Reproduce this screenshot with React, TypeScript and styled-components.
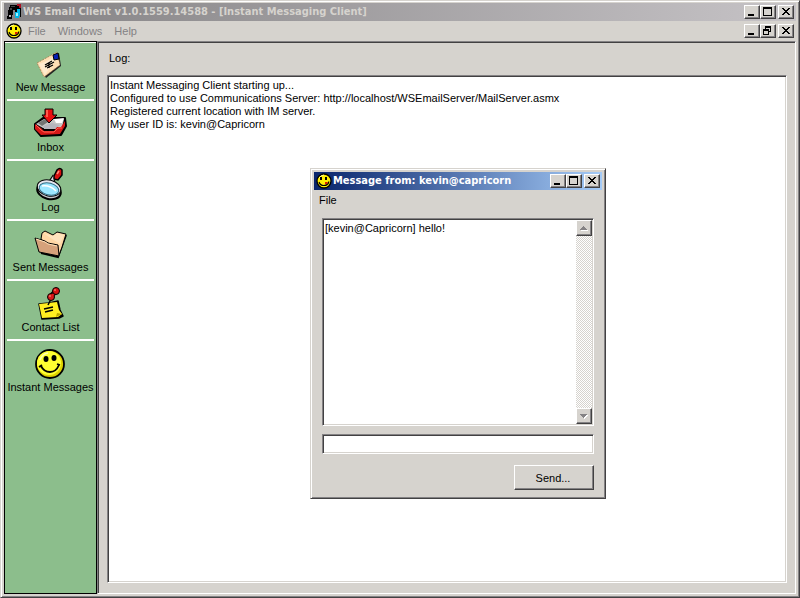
import React, { useState } from "react";
import styled, { createGlobalStyle, css } from "styled-components";

const face = "#d6d3ce";
const shade = "#848284";
const dark = "#424142";
const green = "#8cbe8c";

const GlobalStyle = createGlobalStyle`
  * { box-sizing: border-box; }
  body { margin: 0; background: ${face}; }
  body, button, input, textarea {
    font-family: "Liberation Sans", Arial, sans-serif;
    font-size: 11px;
    line-height: 13px;
    color: #000;
  }
`;

const raised = css`
  border: 1px solid;
  border-color: #fff ${dark} ${dark} #fff;
  box-shadow: inset -1px -1px 0 ${shade};
`;

const sunken = css`
  border: 1px solid;
  border-color: ${shade} #fff #fff ${shade};
  box-shadow: inset 1px 1px 0 ${dark}, inset -1px -1px 0 ${face};
`;

const Frame = styled.div`
  position: relative;
  display: flex;
  flex-direction: column;
  height: 100vh;
  background: ${face};
  border: 1px solid;
  border-color: ${face} ${dark} ${dark} ${face};
  box-shadow: inset 1px 1px 0 #fff, inset -1px -1px 0 ${shade};
  padding: 2px 3px 3px;
`;

const TitleBar = styled.header<{ $active?: boolean }>`
  display: flex;
  align-items: center;
  flex: none;
  height: 18px;
  padding: 0 2px;
  gap: 1px;
  color: ${(p) => (p.$active ? "#fff" : face)};
  background: ${(p) =>
    p.$active
      ? "linear-gradient(90deg, #08246b, #a5cbf7)"
      : "linear-gradient(90deg, #848284, #c6c3c6)"};
`;

const Title = styled.h1`
  flex: 1;
  min-width: 0;
  margin: 0;
  font: bold 11px/16px "DejaVu Sans Condensed", "DejaVu Sans", sans-serif;
  white-space: nowrap;
  overflow: hidden;
`;

const Controls = styled.div`
  display: flex;
  flex: none;
`;

const ControlButton = styled.button`
  ${raised}
  display: flex;
  width: 16px;
  height: 14px;
  padding: 0;
  background: ${face};
  &:last-child { margin-left: 2px; }
`;

const MenuBar = styled.nav`
  display: flex;
  align-items: center;
  flex: none;
  height: 20px;
  padding: 0 2px;
`;

const MenuItem = styled.button<{ $muted?: boolean }>`
  border: 0;
  padding: 0 ${(p) => (p.$muted ? "6px" : "3px")};
  background: none;
  color: ${(p) => (p.$muted ? shade : "#000")};
`;

const Spacer = styled.div`
  flex: 1;
`;

const Body = styled.div`
  display: flex;
  flex: 1;
  min-height: 0;
`;

const Sidebar = styled.nav`
  flex: none;
  width: 93px;
  border: 1px solid #000;
  background: ${green};
  box-shadow: inset 0 1px 0 #fff;
  padding: 0 2px;
`;

const SideButton = styled.button`
  display: flex;
  flex-direction: column;
  align-items: center;
  justify-content: flex-end;
  gap: 1px;
  width: 100%;
  height: 60px;
  padding: 0 0 5px;
  border: 0;
  border-bottom: 2px solid #fff;
  border-image: linear-gradient(${face} 50%, #fff 50%) 1;
  background: none;
  white-space: nowrap;
  &:first-child { height: 59px; }
  &:last-child { border-image: none; border-color: transparent; }
`;

const SideIcon = styled.svg`
  flex: none;
  width: 32px;
  height: 32px;
  overflow: visible;
`;

const Main = styled.main`
  ${sunken}
  display: flex;
  flex-direction: column;
  flex: 1;
  padding: 10px 8px 10px 9px;
`;

const LogLabel = styled.label`
  padding: 0 2px 10px;
`;

const LogArea = styled.textarea`
  ${sunken}
  flex: 1;
  margin: 0;
  padding: 3px 2px;
  resize: none;
  outline: none;
  background: #fff;
`;

const Dialog = styled.section`
  position: absolute;
  left: 309px;
  top: 167px;
  width: 296px;
  padding: 3px;
  background: ${face};
  border: 1px solid;
  border-color: ${face} ${dark} ${dark} ${face};
  box-shadow: inset 1px 1px 0 #fff, inset -1px -1px 0 ${shade};
`;

const DialogForm = styled.form`
  display: flex;
  flex-direction: column;
  align-items: flex-end;
  padding: 8px 8px 5px;
`;

const Conversation = styled.div`
  ${sunken}
  display: flex;
  width: 100%;
  height: 208px;
  padding: 1px;
  background: #fff;
`;

const ConversationText = styled.textarea`
  flex: 1;
  min-width: 0;
  border: 0;
  margin: 0;
  padding: 2px 1px;
  resize: none;
  outline: none;
  background: #fff;
`;

const ScrollTrack = styled.div`
  display: flex;
  flex-direction: column;
  justify-content: space-between;
  width: 16px;
  background: repeating-conic-gradient(#fff 0 25%, ${face} 0 50%) 0 0 / 2px 2px;
`;

const ScrollButton = styled.button`
  ${raised}
  display: flex;
  width: 16px;
  height: 16px;
  padding: 0;
  background: ${face};
`;

const MessageInput = styled.input`
  ${sunken}
  width: 100%;
  height: 20px;
  margin: 8px 0 11px;
  padding: 0 3px;
  outline: none;
  background: #fff;
`;

const SendButton = styled.button`
  ${raised}
  width: 80px;
  height: 25px;
  padding: 2px 2px 0 0;
  background: ${face};
`;

function WindowControls({ middle }: { middle: "maximize" | "restore" }) {
  return (
    <Controls>
      <ControlButton type="button" aria-label="Minimize">
        <svg width="14" height="12" shapeRendering="crispEdges">
          <path d="M3 8h6v2H3z" />
        </svg>
      </ControlButton>
      <ControlButton type="button" aria-label={middle === "restore" ? "Restore" : "Maximize"}>
        <svg width="14" height="12" shapeRendering="crispEdges">
          {middle === "maximize" ? (
            <path fillRule="evenodd" d="M2 1h9v9H2zM3 3v6h7V3z" />
          ) : (
            <path
              fillRule="evenodd"
              d="M4 1h6v6H8V6h1V3H5v1H4zM2 4h6v6H2zM3 6v3h4V6z"
            />
          )}
        </svg>
      </ControlButton>
      <ControlButton type="button" aria-label="Close">
        <svg width="14" height="12" shapeRendering="crispEdges">
          <path d="M3 2h2v1h1v1h2V3h1V2h2v1h-1v1H9v1H8v1h1v1h1v1h1v1H9V8H8V7H6v1H5v1H3V8h1V7h1V6h1V5H5V4H4V3H3z" />
        </svg>
      </ControlButton>
    </Controls>
  );
}

function SmallSmiley() {
  return (
    <svg width="16" height="16" viewBox="0 0 16 16">
      <circle cx="8" cy="8" r="7" fill="#ffef00" stroke="#000" strokeWidth="1.3" />
      <path d="M3 5q2-3 5-3" fill="none" stroke="#ffff9c" />
      <path d="M4 4h2v3H4zM9 4h2v3H9z" />
      <path d="M3 9q1 3.500 5 3.500 4 0 5-4" fill="none" stroke="#000" strokeWidth="1.100" />
      <path d="M9 9h3l-1 2H9z" fill="#e02000" />
    </svg>
  );
}

function MailboxIcon() {
  return (
    <svg width="16" height="16" viewBox="0 0 16 16" shapeRendering="crispEdges">
      <path d="M4 1h7v1h2v2h1v8h-3v1H9V9H7v2H6v4H1v-3h1V6h1V3h1z" />
      <path d="M5 2h4v1H5zM4 4h2v2H4z" fill="#424142" />
      <path d="M7 6h2v3H7z" fill="#848284" />
      <path d="M3 11h2v2H3z" fill="#b5b2b5" />
      <path d="M11 0h4v4h-2V2h-2z" fill="#ad1021" />
      <path d="M11 5h3v7h-1v2H9V8h2z" fill="#00b6e7" />
      <path d="M10 9h2v3h-2z" fill="#9cf3ff" />
      <path d="M14 4h1v9h-1z" />
    </svg>
  );
}

function EnvelopeIcon() {
  return (
    <SideIcon viewBox="1 0 32 32">
      <path d="M4 15 24 4 26 17 11 29z" transform="translate(1 1)" fill="#222" />
      <path d="M3 15 23 4 26 17 10 29z" fill="#ffdfb5" stroke="#9c7142" strokeWidth=".7" strokeDasharray="2 1" />
      <path d="m5 16 8-3 11-7-7 12-6 9z" fill="#ffebce" />
      <path d="m19 7 5-2 1 6-5 1z" fill="#0820b5" stroke="#000" />
      <path d="m11 17 7-4M11 19l9-5M13 20l6-3M15 15v5" fill="none" stroke="#000" strokeWidth="1.3" />
    </SideIcon>
  );
}

function InboxIcon() {
  return (
    <SideIcon viewBox="1 0 32 32">
      <path d="m1 16 8-6h22l1 8-5 9-20 1-6-7z" fill="#000" stroke="#000" strokeWidth="2" strokeLinejoin="round" />
      <path d="m2 16 8-5h20l-2 9H9z" fill="#c6c7c6" />
      <path d="m4 15 7-4 3 3-6 4z" fill="#737573" />
      <path d="m20 11 10-1-2 5h-6z" fill="#fff" />
      <path d="m9 18 9-3 8 2-4 4H10z" fill="#b5b6bd" />
      <path d="m1 16 6 4 3 3h10l3-4h4l4-6v5l-5 8-19 1-6-6z" fill="#d61818" />
      <path d="m2 17 5 5 3 2h10l4-4h4" fill="none" stroke="#ff6352" />
      <path d="M11 1h8v6h4l-8 8-7-8h3z" fill="#e71010" stroke="#000" />
      <path d="M12 2h2v7h-2z" fill="#ff5a4a" />
    </SideIcon>
  );
}

function MagnifierIcon() {
  return (
    <SideIcon viewBox="1 0 32 32">
      <path d="m17 14 4-6" stroke="#000" strokeWidth="5" />
      <path d="m17 14 4-6" stroke="#dedfe7" strokeWidth="3" />
      <path d="m20 8 3-6q3-3 5 0v5l-4 5-4-1z" fill="#d61010" stroke="#000" strokeWidth="1.500" />
      <path d="m23 6 2-3" stroke="#ff8c7b" strokeWidth="1.500" />
      <ellipse cx="15" cy="23" rx="12" ry="8" transform="rotate(14 15 23)" fill="#c6c7ce" stroke="#000" strokeWidth="2" />
      <ellipse cx="15" cy="20" rx="12" ry="8" transform="rotate(14 15 20)" fill="#e7e7ef" stroke="#000" />
      <ellipse cx="15" cy="21" rx="10" ry="6" transform="rotate(14 15 21)" fill="#9ce7ff" stroke="#316d84" />
      <path d="M8 18q8-1 14 5" fill="none" stroke="#fff" strokeWidth="1.500" />
    </SideIcon>
  );
}

function FolderIcon() {
  return (
    <SideIcon viewBox="1 0 32 32">
      <path d="m32 7-8 22-17-4" fill="none" stroke="#000" strokeWidth="2" />
      <path d="m7 11 1-6 3-2 8 4 4-3 9 2-4 13-3 8z" fill="#ffd7a5" stroke="#000" strokeLinejoin="round" />
      <path d="m9 5 10 3 4-3 7 2-4 9z" fill="#ffe3bd" />
      <path d="m1 10 10 3 3 2 10 2 1 11-20-4z" fill="#d6a27b" stroke="#000" strokeLinejoin="round" />
      <path d="m2 11 9 3 3 2 9 2" fill="none" stroke="#ffdfb5" />
    </SideIcon>
  );
}

function NoteIcon() {
  return (
    <SideIcon viewBox="1 0 32 32">
      <path d="m5 16 10-1 9-2 2 9 3 6-4 2-17 1z" fill="#000" stroke="#000" strokeWidth="1.500" strokeLinejoin="round" />
      <path d="m5 16 18-2 2 8 3 4-4 3-16 1z" fill="#ffef21" />
      <path d="m22 29 1-4 5 1z" fill="#b5a600" />
      <path d="m10 21 9-2M11 24l8-2" fill="none" stroke="#000" strokeWidth="1.500" />
      <path d="m14 17 3-6" stroke="#000" strokeWidth="1.500" />
      <path d="m16 9 6-6" stroke="#000" strokeWidth="5" />
      <circle cx="17" cy="9" r="3.500" fill="#d61818" stroke="#000" />
      <path d="m18 8 3-4" stroke="#e71818" strokeWidth="2" />
      <circle cx="22" cy="3" r="3.500" fill="#d61010" stroke="#000" />
      <path d="M20 2h2M15 8h2" stroke="#ff9c8c" />
    </SideIcon>
  );
}

function SmileyIcon() {
  return (
    <SideIcon viewBox="1 0 32 32">
      <circle cx="16" cy="16" r="14" fill="#ded300" stroke="#000" strokeWidth="1.800" />
      <circle cx="15" cy="15" r="12" fill="#ffff31" />
      <path d="M6 12q2-6 8-7" fill="none" stroke="#ffffb5" strokeWidth="1.500" />
      <ellipse cx="12" cy="11" rx="2.500" ry="3" />
      <ellipse cx="20" cy="10" rx="2.500" ry="3" />
      <path d="M7 18q3 6 9 6t9-7M5 19l3-2M23 16l3 1" fill="none" stroke="#000" strokeWidth="1.800" />
    </SideIcon>
  );
}

const sections = [
  { label: "New Message", Icon: EnvelopeIcon },
  { label: "Inbox", Icon: InboxIcon },
  { label: "Log", Icon: MagnifierIcon },
  { label: "Sent Messages", Icon: FolderIcon },
  { label: "Contact List", Icon: NoteIcon },
  { label: "Instant Messages", Icon: SmileyIcon },
];

const logText = [
  "Instant Messaging Client starting up...",
  "Configured to use Communications Server: http://localhost/WSEmailServer/MailServer.asmx",
  "Registered current location with IM server.",
  "My user ID is: kevin@Capricorn",
].join("\n");

function MessageDialog() {
  const [draft, setDraft] = useState("");
  return (
    <Dialog role="dialog" aria-labelledby="dialog-title">
      <TitleBar $active>
        <SmallSmiley />
        <Title as="h2" id="dialog-title">Message from: kevin@capricorn</Title>
        <WindowControls middle="maximize" />
      </TitleBar>
      <MenuBar>
        <MenuItem type="button">File</MenuItem>
      </MenuBar>
      <DialogForm onSubmit={(e) => e.preventDefault()}>
        <Conversation>
          <ConversationText
            readOnly
            aria-label="Conversation"
            spellCheck={false}
            value="[kevin@Capricorn] hello!"
          />
          <ScrollTrack>
            <ScrollButton type="button" aria-label="Scroll up">
              <svg width="14" height="14" shapeRendering="crispEdges">
                <path d="M7 6h1v1h1v1h1v1h1v1H4V9h1V8h1V7h1z" fill="#fff" />
                <path d="M6 5h1v1h1v1h1v1h1v1H3V8h1V7h1V6h1z" fill={shade} />
              </svg>
            </ScrollButton>
            <ScrollButton type="button" aria-label="Scroll down">
              <svg width="14" height="14" shapeRendering="crispEdges">
                <path d="M4 6h7v1h-1v1H9v1H8v1H7V9H6V8H5V7H4z" fill="#fff" />
                <path d="M3 5h7v1H9v1H8v1H7v1H6V8H5V7H4V6H3z" fill={shade} />
              </svg>
            </ScrollButton>
          </ScrollTrack>
        </Conversation>
        <MessageInput
          type="text"
          aria-label="Message"
          value={draft}
          onChange={(e) => setDraft(e.target.value)}
        />
        <SendButton type="submit">Send...</SendButton>
      </DialogForm>
    </Dialog>
  );
}

export default function App() {
  return (
    <>
      <GlobalStyle />
      <Frame>
        <TitleBar>
          <MailboxIcon />
          <Title>WS Email Client v1.0.1559.14588 - [Instant Messaging Client]</Title>
          <WindowControls middle="maximize" />
        </TitleBar>
        <MenuBar>
          <SmallSmiley />
          <MenuItem type="button" $muted>File</MenuItem>
          <MenuItem type="button" $muted>Windows</MenuItem>
          <MenuItem type="button" $muted>Help</MenuItem>
          <Spacer />
          <WindowControls middle="restore" />
        </MenuBar>
        <Body>
          <Sidebar aria-label="Sections">
            {sections.map(({ label, Icon }) => (
              <SideButton type="button" key={label}>
                <Icon />
                {label}
              </SideButton>
            ))}
          </Sidebar>
          <Main>
            <LogLabel htmlFor="log">Log:</LogLabel>
            <LogArea id="log" readOnly spellCheck={false} value={logText} />
          </Main>
        </Body>
        <MessageDialog />
      </Frame>
    </>
  );
}
